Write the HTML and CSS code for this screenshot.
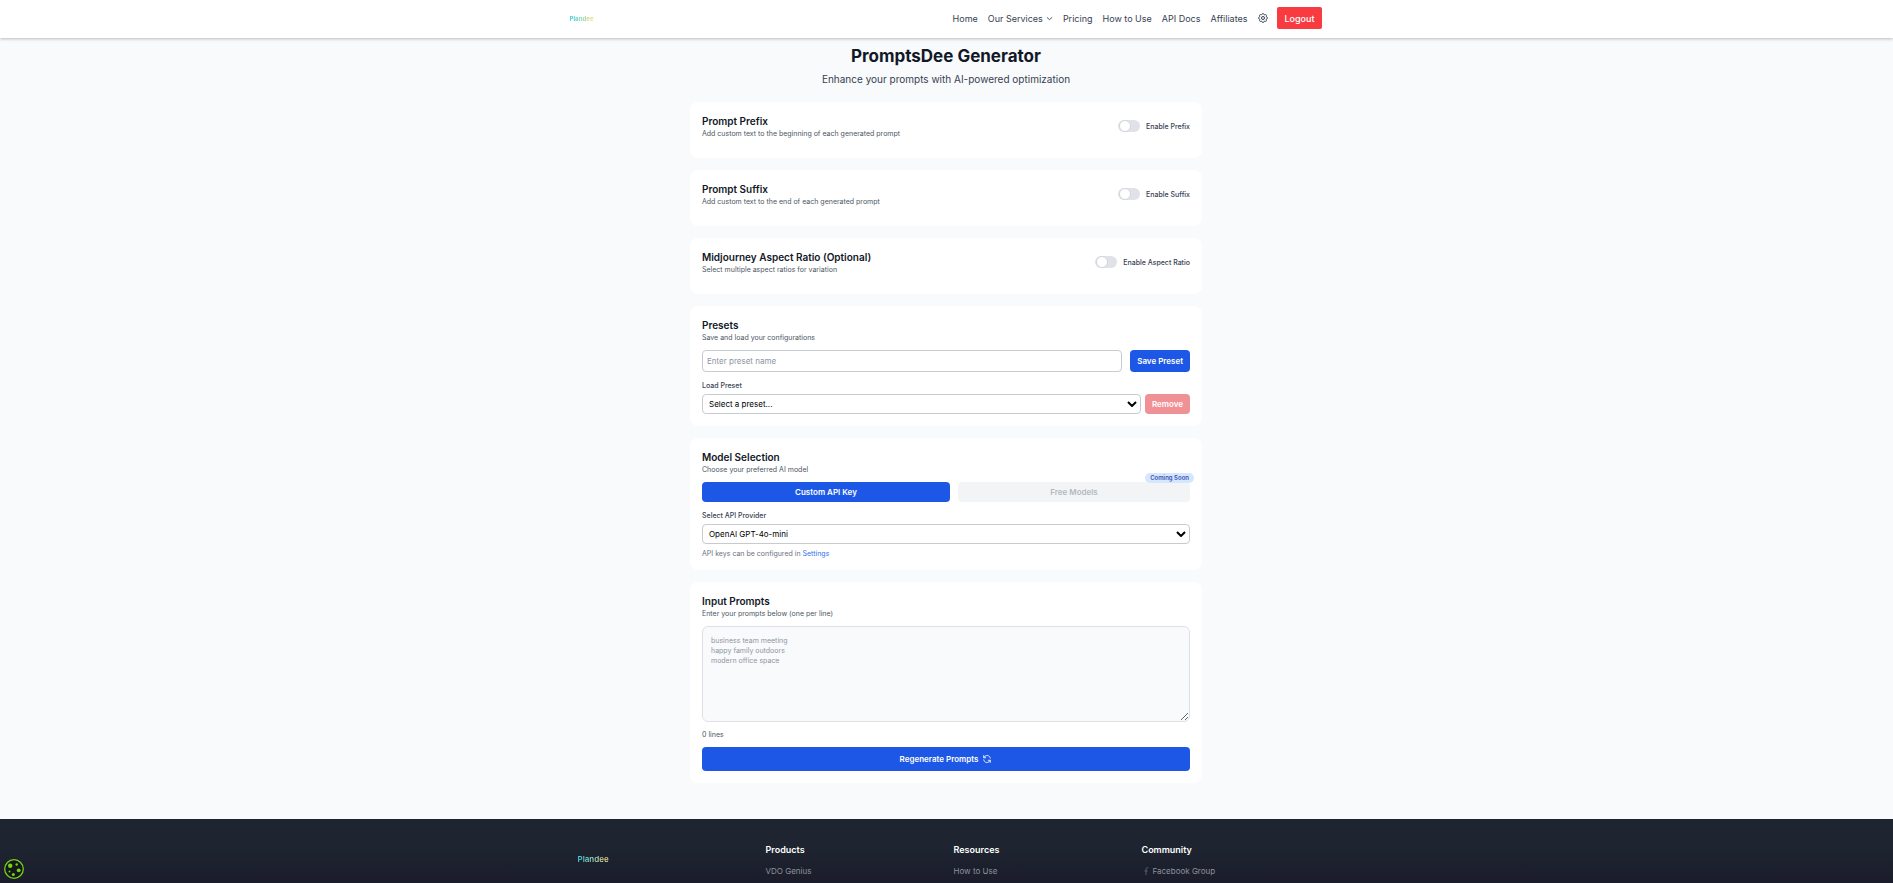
FILE: index.html
```html
<!DOCTYPE html>
<html lang="en">
<head>
<meta charset="utf-8">
<title>PromptsDee Generator</title>
<meta name="viewport" content="width=device-width, initial-scale=1.0">
<link rel="stylesheet" href="styles.css">
</head>
<body>

<header class="site-header">
  <div class="header-inner">
    <a href="#" class="logo">Plandee</a>
    <nav class="main-nav">
      <a href="#">Home</a>
      <a href="#" class="has-menu">Our Services
        <svg class="chevron" viewBox="0 0 24 24" fill="none" stroke="currentColor" stroke-width="3"><path d="M3 8l9 8 9-8"/></svg>
      </a>
      <a href="#">Pricing</a>
      <a href="#">How to Use</a>
      <a href="#">API Docs</a>
      <a href="#">Affiliates</a>
      <a href="#" class="gear-link" aria-label="Settings">
        <svg class="gear" viewBox="0 0 24 24" fill="none" stroke="currentColor" stroke-width="2" stroke-linejoin="round"><path d="M10.3 4.3c.4-1.8 2.9-1.8 3.4 0a1.7 1.7 0 0 0 2.6 1.1c1.5-.9 3.3.8 2.4 2.4a1.7 1.7 0 0 0 1 2.5c1.8.4 1.8 2.9 0 3.4a1.7 1.7 0 0 0-1 2.6c.9 1.5-.9 3.3-2.4 2.4a1.7 1.7 0 0 0-2.6 1c-.4 1.8-2.9 1.8-3.4 0a1.7 1.7 0 0 0-2.6-1c-1.5.9-3.3-.9-2.4-2.4a1.7 1.7 0 0 0-1-2.6c-1.8-.4-1.8-2.9 0-3.4a1.7 1.7 0 0 0 1-2.5c-.9-1.6.9-3.3 2.4-2.4 1 .6 2.3.1 2.6-1.1z"/><circle cx="12" cy="12" r="3"/></svg>
      </a>
      <button type="button" class="logout">Logout</button>
    </nav>
  </div>
</header>

<main class="content">
  <h1>PromptsDee Generator</h1>
  <p class="lead">Enhance your prompts with AI-powered optimization</p>

  <section class="card">
    <div class="card-head">
      <div>
        <h2>Prompt Prefix</h2>
        <p class="hint">Add custom text to the beginning of each generated prompt</p>
      </div>
      <label class="toggle"><input type="checkbox" class="switch">Enable Prefix</label>
    </div>
  </section>

  <section class="card">
    <div class="card-head">
      <div>
        <h2>Prompt Suffix</h2>
        <p class="hint">Add custom text to the end of each generated prompt</p>
      </div>
      <label class="toggle"><input type="checkbox" class="switch">Enable Suffix</label>
    </div>
  </section>

  <section class="card">
    <div class="card-head">
      <div>
        <h2>Midjourney Aspect Ratio (Optional)</h2>
        <p class="hint">Select multiple aspect ratios for variation</p>
      </div>
      <label class="toggle"><input type="checkbox" class="switch">Enable Aspect Ratio</label>
    </div>
  </section>

  <section class="card">
    <div class="card-head">
      <div>
        <h2>Presets</h2>
        <p class="hint">Save and load your configurations</p>
      </div>
    </div>
    <div class="save-row">
      <input type="text" class="text-input" placeholder="Enter preset name" aria-label="Preset name">
      <button type="button" class="btn">Save Preset</button>
    </div>
    <label class="field-label" for="preset">Load Preset</label>
    <div class="load-row">
      <div class="select-wrap">
        <select id="preset">
          <option>Select a preset...</option>
        </select>
        <svg class="arrow" viewBox="0 0 10 6" fill="none" stroke="#000" stroke-width="2"><path d="M1 1l4 4 4-4"/></svg>
      </div>
      <button type="button" class="btn btn-remove" disabled>Remove</button>
    </div>
  </section>

  <section class="card">
    <div class="card-head">
      <div>
        <h2>Model Selection</h2>
        <p class="hint">Choose your preferred AI model</p>
      </div>
    </div>
    <div class="tabs">
      <button type="button" class="btn tab">Custom API Key</button>
      <div class="tab-soon">
        <button type="button" class="btn btn-muted" disabled>Free Models</button>
        <span class="badge">Coming Soon</span>
      </div>
    </div>
    <label class="field-label" for="provider">Select API Provider</label>
    <div class="select-wrap">
      <select id="provider">
        <option>OpenAI GPT-4o-mini</option>
      </select>
      <svg class="arrow" viewBox="0 0 10 6" fill="none" stroke="#000" stroke-width="2"><path d="M1 1l4 4 4-4"/></svg>
    </div>
    <p class="note">API keys can be configured in <a href="#">Settings</a></p>
  </section>

  <section class="card">
    <div class="card-head">
      <div>
        <h2>Input Prompts</h2>
        <p class="hint"><label for="prompts">Enter your prompts below (one per line)</label></p>
      </div>
    </div>
    <textarea id="prompts" placeholder="business team meeting
happy family outdoors
modern office space"></textarea>
    <p class="count">0 lines</p>
    <button type="button" class="btn btn-generate">Regenerate Prompts
      <svg class="refresh" viewBox="0 0 24 24" fill="none" stroke="currentColor" stroke-width="2"><path d="M4 3v6h6M20 21v-6h-6M4.500 9a8 8 0 0 1 14.500-1.500L20 11M19.500 15a8 8 0 0 1-14.500 1.500L4 13"/></svg>
    </button>
  </section>
</main>

<footer class="site-footer">
  <div class="footer-inner">
    <div><a href="#" class="logo footer-logo">Plandee</a></div>
    <div>
      <h3>Products</h3>
      <a href="#">VDO Genius</a>
    </div>
    <div>
      <h3>Resources</h3>
      <a href="#">How to Use</a>
    </div>
    <div>
      <h3>Community</h3>
      <a href="#" class="social">
        <svg class="fb" viewBox="0 0 8 10" fill="none" stroke="currentColor"><path d="M7 1H5.500C4.500 1 4 1.600 4 2.500V10M2 5h4"/></svg>
        Facebook Group</a>
    </div>
  </div>
</footer>

<button type="button" class="cookie" aria-label="Cookie settings">
  <svg viewBox="0 0 20 20"><circle cx="10" cy="10" r="9.300" fill="#14181a" stroke="#77d118" stroke-width="1.300"/><g fill="#77d118"><circle cx="6.200" cy="6.700" r="2.200"/><circle cx="12.700" cy="5.500" r="1.200"/><circle cx="14.700" cy="11.300" r="1.900"/><circle cx="5.500" cy="12.500" r="1"/><circle cx="9.300" cy="15.500" r="1.500"/></g></svg>
</button>

</body>
</html>
```
FILE: styles.css
```css
* {
  box-sizing: border-box;
}
body {
  margin: 0;
  min-height: 100vh;
  display: flex;
  flex-direction: column;
  font-family: Inter, "Liberation Sans", sans-serif;
  font-size: 8px;
  color: #111827;
  background: #f8fafc;
}
h1, h2, h3, p {
  margin: 0;
}
a {
  color: inherit;
  text-decoration: none;
}
button, input, select, textarea {
  font-family: inherit;
}
svg {
  flex: none;
}

/* Header */
.site-header {
  background: #fff;
  box-shadow: 0 1px 3px rgba(0, 0, 0, 0.25);
}
.header-inner {
  max-width: 768px;
  height: 38px;
  margin: 0 auto;
  padding: 0 9px 2px 7px;
  display: flex;
  align-items: center;
  justify-content: space-between;
}
.logo {
  font-size: 6px;
  font-weight: 800;
  color: transparent;
  background: linear-gradient(90deg, #3fd0e0, #f7e08a);
  background-clip: text;
  -webkit-background-clip: text;
}
.main-nav {
  display: flex;
  align-items: center;
  gap: 10px;
  font-size: 9px;
  color: #374151;
}
.has-menu {
  display: flex;
  align-items: center;
  gap: 3px;
}
.chevron {
  width: 7px;
  height: 7px;
}
.gear-link {
  display: flex;
}
.gear {
  width: 12px;
  height: 12px;
}
.logout {
  height: 22px;
  margin-left: -2px;
  padding: 0 7px;
  border: none;
  border-radius: 2px;
  background: #f83b41;
  color: #fff;
  font-size: 9px;
  font-weight: 500;
}

/* Main column */
.content {
  width: 100%;
  max-width: 513px;
  margin: 0 auto;
  padding: 8px 1px 36px 0;
}
h1 {
  font-size: 17px;
  line-height: 20px;
  font-weight: 700;
  text-align: center;
}
.lead {
  margin: 6px 0 16px;
  font-size: 10px;
  line-height: 14px;
  text-align: center;
  color: #374151;
}
.card {
  margin-bottom: 12px;
  padding: 12px;
  border-radius: 8px;
  background: #fff;
}
.card:last-child {
  margin-bottom: 0;
}
.card-head {
  display: flex;
  align-items: flex-start;
  justify-content: space-between;
  margin-bottom: 7px;
}
h2 {
  font-size: 10px;
  line-height: 14px;
  font-weight: 600;
}
.hint, .note, .count {
  font-size: 7px;
  line-height: 11px;
  color: #4b5563;
}
.toggle {
  display: flex;
  align-items: center;
  gap: 6px;
  padding-top: 6px;
  font-size: 7px;
  font-weight: 500;
  color: #374151;
}
.switch {
  appearance: none;
  display: flex;
  align-items: center;
  width: 22px;
  height: 12px;
  margin: 0;
  padding: 1px;
  border-radius: 6px;
  background: #e1e2e8;
}
.switch::before {
  content: "";
  width: 10px;
  height: 10px;
  border: 1px solid #d1d5db;
  border-radius: 50%;
  background: #fff;
}

/* Form fields */
.save-row {
  display: flex;
  gap: 8px;
}
.load-row {
  display: flex;
  gap: 4px;
}
.text-input {
  flex: 1;
  height: 22px;
  padding: 0 4px;
  border: 1px solid #c6cad1;
  border-radius: 4px;
  font-size: 8px;
}
::placeholder {
  color: #8e95a3;
}
.field-label {
  display: block;
  margin: 9px 0 3px;
  font-size: 7px;
  line-height: 10px;
  font-weight: 500;
  color: #374151;
}
.select-wrap {
  position: relative;
  flex: 1;
}
select {
  appearance: none;
  display: block;
  width: 100%;
  height: 20px;
  padding: 0 6px;
  border: 1px solid #c6cad1;
  border-radius: 4px;
  background: #fff;
  color: #000;
  font-size: 8px;
}
.arrow {
  position: absolute;
  top: 7px;
  right: 4px;
  width: 10px;
  height: 6px;
  pointer-events: none;
}
.btn {
  padding: 0 7px;
  border: none;
  border-radius: 4px;
  background: #1d57e5;
  color: #fff;
  font-size: 8px;
  font-weight: 600;
}
.btn-remove {
  background: #f09196;
}
.tabs {
  display: flex;
  gap: 8px;
}
.tab {
  flex: 1;
  height: 20px;
  padding: 0 8px;
}
.tab-soon {
  position: relative;
  flex: 1;
}
.btn-muted {
  width: 100%;
  height: 20px;
  background: #f3f4f6;
  color: #b4b8c0;
}
.badge {
  position: absolute;
  top: -9px;
  right: -4px;
  padding: 0 5px;
  border-radius: 5px;
  background: #d6e7fd;
  color: #3553b8;
  font-size: 6px;
  line-height: 10px;
  font-weight: 600;
}
.note {
  margin-top: 4px;
  margin-bottom: -1px;
  color: #6b7280;
}
.note a {
  color: #2f6fed;
}
textarea {
  display: block;
  width: 100%;
  height: 96px;
  padding: 9px 8px;
  border: 1px solid #dfe1e6;
  border-radius: 6px;
  background: #f8fafc;
  font-size: 7px;
  line-height: 10px;
}
.count {
  margin: 7px 0;
}
.btn-generate {
  display: flex;
  align-items: center;
  justify-content: center;
  gap: 4px;
  width: 100%;
  height: 24px;
}
.refresh {
  width: 10px;
  height: 10px;
}

/* Footer */
.site-footer {
  flex: 1;
  background: linear-gradient(#1e2530 40%, #1b1c2b);
}
.footer-inner {
  display: grid;
  grid-template-columns: repeat(4, 1fr);
  gap: 16px;
  max-width: 768px;
  margin: 0 auto;
  padding: 24px 17px 0 15px;
  font-size: 8px;
  line-height: 12px;
  color: #8d929c;
}
.footer-logo {
  display: inline-block;
  padding-top: 10px;
  font-size: 8px;
  font-weight: 600;
}
h3 {
  margin-bottom: 8px;
  font-size: 9px;
  line-height: 14px;
  font-weight: 600;
  color: #fff;
}
.social {
  display: flex;
  align-items: center;
  gap: 3px;
}
.fb {
  width: 8px;
  height: 8px;
  color: #646b77;
}
.cookie {
  position: fixed;
  left: 4px;
  bottom: 4px;
  width: 20px;
  height: 20px;
  padding: 0;
  border: none;
  background: none;
}
.cookie svg {
  display: block;
}
```
